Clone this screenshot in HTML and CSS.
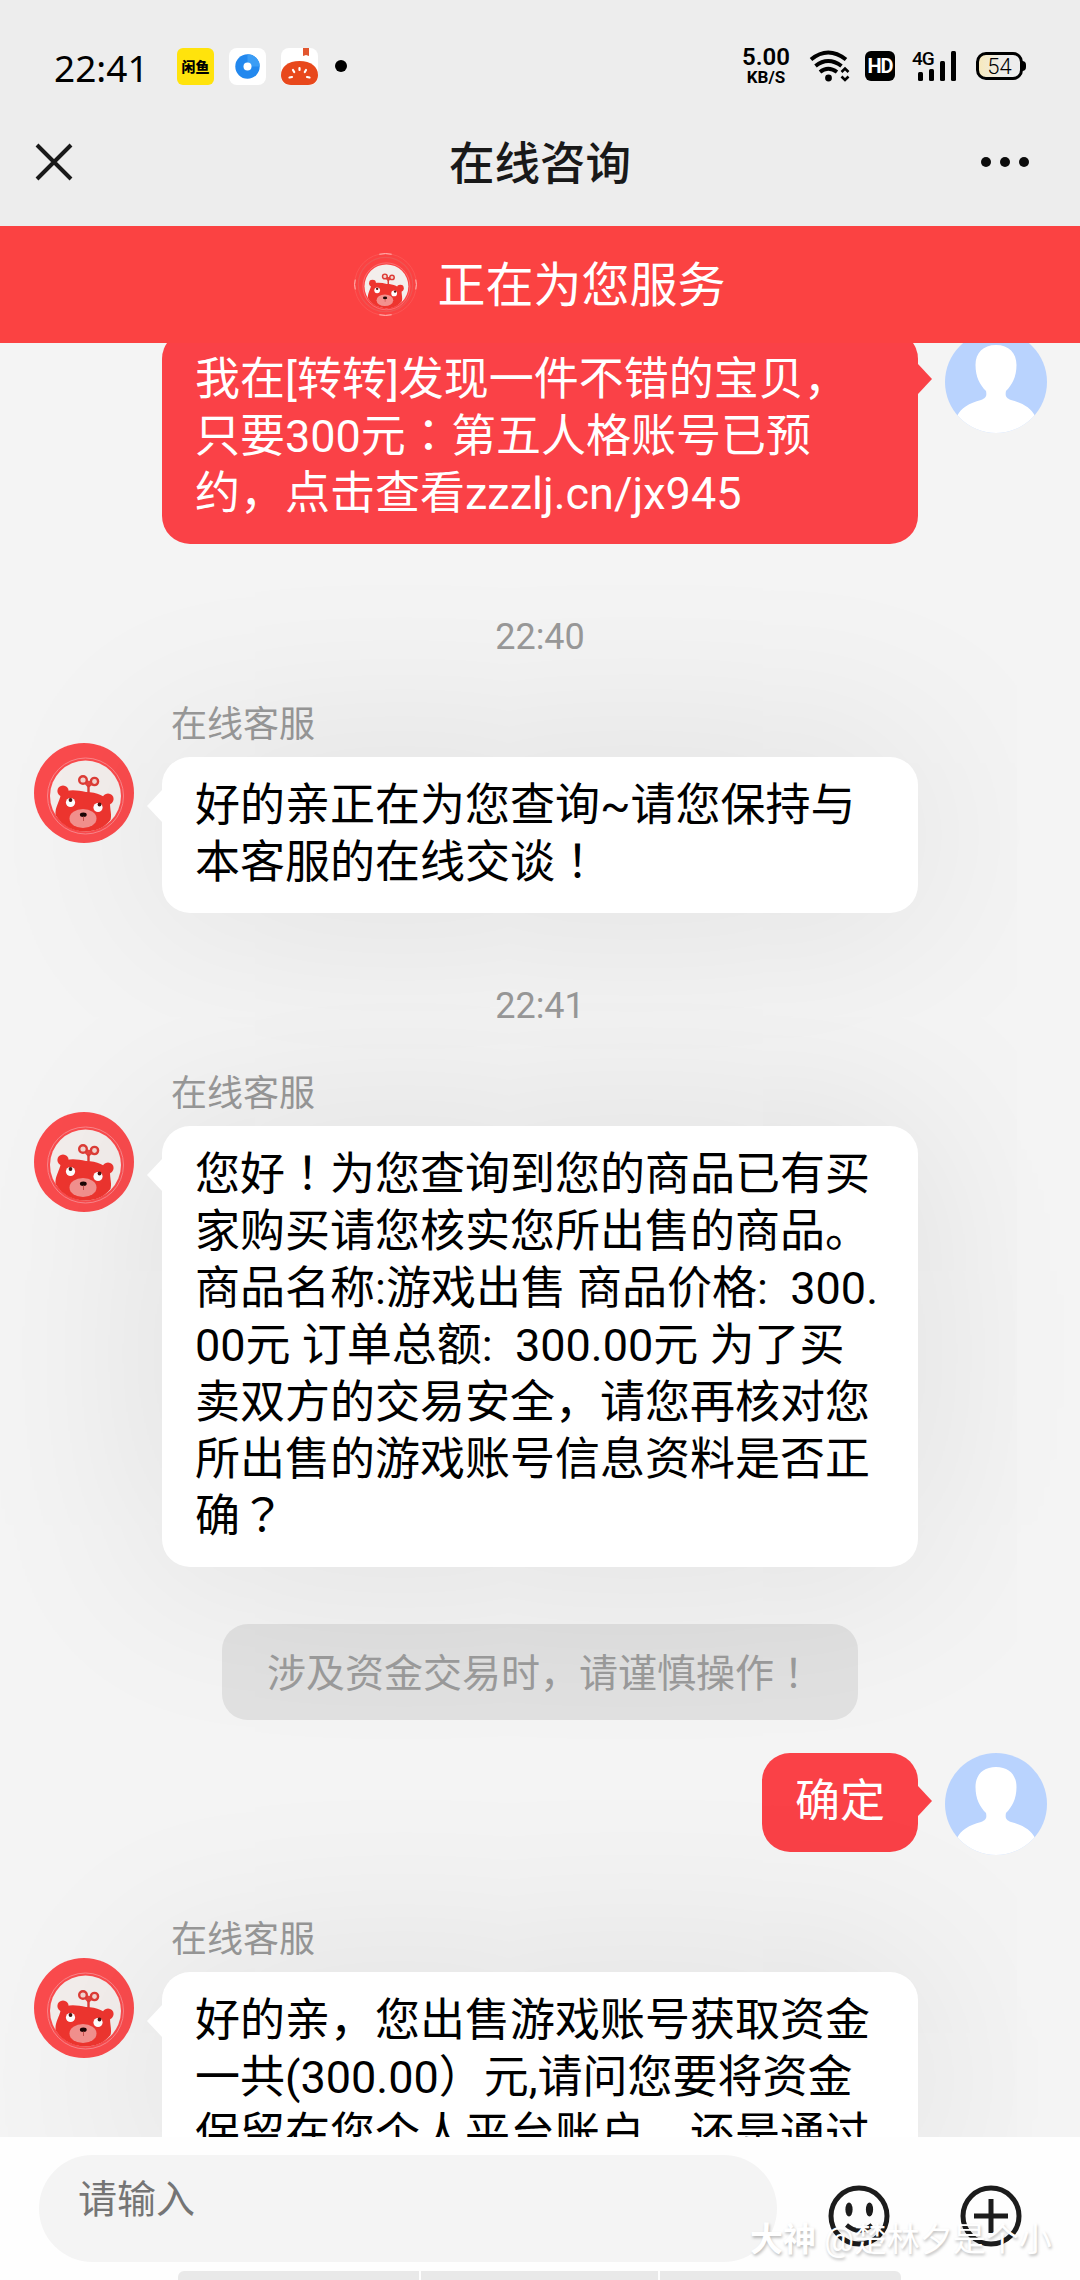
FILE: index.html
```html
<!DOCTYPE html>
<html lang="zh-CN">
<head>
<meta charset="utf-8">
<title>在线咨询</title>
<link rel="stylesheet" href="styles.css">
</head>
<body>
<svg class="defs" width="0" height="0">
  <symbol id="bear" viewBox="0 0 100 100">
    <circle cx="51.5" cy="53" r="38" fill="none" stroke="#f9858a" stroke-width="1"/>
    <circle cx="51.5" cy="53" r="35.5" fill="#f3eeec"/>
    <g fill="#ee352f">
      <circle cx="29" cy="48" r="5.6"/>
      <circle cx="74" cy="56" r="5.6"/>
      <path d="M27 51C33 46 42 47 52 49C63 49 72 53 76 60C76 67 78 72 76.5 77C70 85 61 88.500 51 88.500C40 88.500 28 83 21.500 72C21 64 25 60 27 51Z"/>
    </g>
    <path d="M49 37L54.500 43L60 38.500" fill="#e8443e" stroke="#e8443e" stroke-width="3"/>
    <g fill="none" stroke="#dd3c36" stroke-width="2.400">
      <circle cx="49" cy="37" r="3.800" fill="#f3d5d0"/>
      <circle cx="60.500" cy="38.500" r="3.600" fill="#f3d5d0"/>
      <path d="M54.500 42V50"/>
    </g>
    <circle cx="36.500" cy="59.500" r="4.600" fill="#fff"/>
    <circle cx="64" cy="64.500" r="4.600" fill="#fff"/>
    <circle cx="36.500" cy="57" r="1.900" fill="#4a1613"/>
    <circle cx="65.500" cy="61.500" r="1.900" fill="#4a1613"/>
    <ellipse cx="49" cy="75.500" rx="13.500" ry="9.500" fill="#f3918e"/>
    <ellipse cx="49.300" cy="71.800" rx="3.400" ry="2.200" fill="#1c0605"/>
    <path d="M49.500 73.500V78" stroke="#c8524e" stroke-width="1"/>
  </symbol>
  <symbol id="person" viewBox="0 0 102 102">
    <clipPath id="disc"><circle cx="51" cy="51" r="51"/></clipPath>
    <g clip-path="url(#disc)">
      <rect width="102" height="102" fill="#b9d3fe"/>
      <path d="M51 14C64 14 71.500 22 71.500 34C71.500 46 67 54 61 60C60 65 61 67 66 69C78 72 86 77 90 85V102H12V85C16 77 24 72 36 69C41 67 42 65 41 60C35 54 30.500 46 30.500 34C30.500 22 38 14 51 14Z" fill="#fff"/>
    </g>
  </symbol>
</svg>

<div class="screen">
  <header class="top">
    <div class="status">
      <div class="status-left">
        <span class="clock">22:41</span>
        <span class="app app-yellow">闲鱼</span>
        <svg class="app" viewBox="0 0 37 37"><rect width="37" height="37" rx="8" fill="#fff"/><circle cx="18.500" cy="18.500" r="12.200" fill="#2288ee"/><path d="M18.500 6.300A12.200 12.200 0 0 1 30.700 18.500L22 18.500A3.800 3.800 0 0 0 18.500 15Z" fill="#3b9df5"/><circle cx="18.500" cy="18.500" r="4" fill="#fff"/></svg>
        <svg class="app app-last" viewBox="0 0 37 37"><rect width="37" height="37" rx="8" fill="#fff"/><path d="M22 0H28V8L25 7L22 8Z" fill="#e2562f"/><path d="M18.500 13C30 13 37 19 37 27C37 33 33 37 27 37H10C4 37 0 33 0 27C0 19 7 13 18.500 13Z" fill="#e8481c"/><g stroke="#fff" stroke-width="2.200" stroke-linecap="round"><path d="M18.500 20V22M12 22L13.200 24M25 22L23.800 24M8.500 29.500L11 29M28.500 29.500L26 29"/></g></svg>
        <i class="dot"></i>
      </div>
      <div class="status-right">
        <div class="speed"><b>5.00</b><span>KB/S</span></div>
        <svg class="wifi" width="42" height="32" viewBox="0 0 42 32"><g fill="none" stroke="#000" stroke-width="4"><path d="M2 9.500Q19 -4.500 37 9.500"/><path d="M6.500 16Q19 6 32.500 16"/><path d="M11 22Q19 15.500 28 22"/></g><circle cx="19.500" cy="28" r="3.400"/><path d="M32.500 22L36 18.500L39.500 22M32.500 26.500L36 30L39.500 26.500" fill="none" stroke="#000" stroke-width="2.600"/></svg>
        <span class="hd">HD</span>
        <div class="signal"><span>4G</span><svg width="44" height="30" viewBox="0 0 44 30"><rect x="6" y="21" width="5" height="9" rx="1.500"/><rect x="17" y="18" width="5" height="12" rx="1.500"/><rect x="28" y="10" width="5" height="20" rx="1.500"/><rect x="39" y="0" width="5" height="30" rx="1.500"/></svg></div>
        <div class="battery"><span>54</span></div>
      </div>
    </div>
    <nav class="nav">
      <svg width="38" height="38" viewBox="0 0 38 38"><path d="M2 2L36 36M36 2L2 36" stroke="#191919" stroke-width="4"/></svg>
      <h1>在线咨询</h1>
      <svg width="50" height="12" viewBox="0 0 50 12"><g fill="#0c0c0c"><circle cx="6" cy="6" r="5"/><circle cx="25" cy="6" r="5"/><circle cx="44" cy="6" r="5"/></g></svg>
    </nav>
  </header>

  <div class="banner">
    <svg width="63" height="63" viewBox="-1 -1 102 102"><circle cx="50" cy="50" r="50" fill="none" stroke="#fb5554" stroke-width="1.500"/><circle cx="50" cy="50" r="44" fill="none" stroke="#ee5553" stroke-width="2"/><path d="M40 1Q50 -1 60 1M40 99Q50 101 60 99M1 42Q-1 50 1 58M99 42Q101 50 99 58" fill="none" stroke="#ffc4c0" stroke-width="1.500"/><use href="#bear" width="100" height="100"/></svg>
    <span>正在为您服务</span>
  </div>

  <main class="chat">
    <div class="row mine">
      <div class="bubble red">我在[转转]发现一件不错的宝贝，<br>只要300元<span class="mid" lang="zh-TW">：</span>第五人格账号已预<br>约，点击查看zzzlj.cn/jx945</div>
      <svg class="face"><use href="#person"/></svg>
    </div>
    <time>22:40</time>
    <div class="row">
      <svg class="logo"><use href="#bear"/></svg>
      <div class="body">
        <div class="name">在线客服</div>
        <div class="bubble">好的亲正在为您查询~请您保持与<br>本客服的在线交谈<span class="mid" lang="zh-TW">！</span></div>
      </div>
    </div>
    <time>22:41</time>
    <div class="row">
      <svg class="logo"><use href="#bear"/></svg>
      <div class="body">
        <div class="name">在线客服</div>
        <div class="bubble">您好<span class="mid" lang="zh-TW">！</span>为您查询到您的商品已有买<br>家购买请您核实您所出售的商品。<br>商品名称:游戏出售 商品价格:&nbsp;&nbsp;300.<br>00元 订单总额:&nbsp;&nbsp;300.00元 为了买<br>卖双方的交易安全，请您再核对您<br>所出售的游戏账号信息资料是否正<br>确<span class="mid" lang="zh-TW">？</span></div>
      </div>
    </div>
    <div class="notice">涉及资金交易时，请谨慎操作<span class="mid" lang="zh-TW">！</span></div>
    <div class="row mine">
      <div class="bubble red">确定</div>
      <svg class="face"><use href="#person"/></svg>
    </div>
    <div class="row last">
      <svg class="logo"><use href="#bear"/></svg>
      <div class="body">
        <div class="name">在线客服</div>
        <div class="bubble">好的亲，您出售游戏账号获取资金<br>一共(300.00）元,请问您要将资金<br>保留在您个人平台账户，还是通过</div>
      </div>
    </div>
  </main>

  <footer class="composer">
    <div class="tools">
      <div class="input">请输入</div>
      <svg class="tool" viewBox="0 0 62 62"><circle cx="31" cy="31" r="28" fill="none" stroke="#1c1c1c" stroke-width="5"/><ellipse cx="21" cy="24.500" rx="3.600" ry="7" fill="#1c1c1c"/><ellipse cx="41.500" cy="24.500" rx="3.600" ry="7" fill="#1c1c1c"/><path d="M18.500 40Q31 51 44 40" fill="none" stroke="#1c1c1c" stroke-width="4.500"/></svg>
      <svg class="tool plus" viewBox="0 0 62 62"><circle cx="31" cy="31" r="28" fill="none" stroke="#1c1c1c" stroke-width="5"/><path d="M31 14V48M14 31H48" stroke="#1c1c1c" stroke-width="5"/></svg>
    </div>
    <div class="strip"><i></i><i></i><i></i></div>
    <div class="mark"><b>大神</b> @楚林夕是个小</div>
  </footer>
</div>
</body>
</html>
```
FILE: styles.css
```css
* { box-sizing: border-box; }
body {
  margin: 0;
  font-family: Roboto, "Noto Sans CJK SC", sans-serif;
  color: #000;
}
.defs { display: block; position: absolute; }
.screen {
  width: 1080px;
  height: 2280px;
  display: flex;
  flex-direction: column;
  overflow: hidden;
  background: #f4f4f4;
}
.top { height: 226px; background: #ededed; flex: none; }
.status {
  height: 132px;
  padding: 0 57px 0 54px;
  display: flex;
  align-items: center;
  justify-content: space-between;
}
.status-left, .status-right { display: flex; align-items: center; }
.clock {
  width: 123px;
  font: 37px/40px "Noto Sans", sans-serif;
  padding-top: 3px;
}
.app { width: 37px; height: 37px; margin-right: 15px; }
.app-last { margin-right: 17px; }
.app-yellow {
  border-radius: 6px;
  background: #ffe30c;
  font: 900 14px/37px "Noto Sans CJK SC", sans-serif;
  text-align: center;
}
.dot { width: 12px; height: 12px; border-radius: 50%; background: #000; }
.speed {
  width: 50px;
  margin-right: 18px;
  display: flex;
  flex-direction: column;
  align-items: center;
}
.speed b { font-size: 24px; line-height: 23px; font-weight: 600; }
.speed span { font-size: 17px; line-height: 17px; font-weight: 700; }
.wifi { margin-right: 14px; }
.hd {
  width: 30px;
  height: 30px;
  margin-right: 17px;
  border-radius: 6px;
  background: #000;
  color: #fff;
  font: 700 20px/31px "Roboto", sans-serif;
  text-align: center;
  letter-spacing: -1px;
}
.signal { display: grid; width: 46px; margin-right: 18px; }
.signal span, .signal svg { grid-area: 1 / 1; }
.signal span { font-size: 19px; line-height: 15px; font-weight: 500; letter-spacing: -1px; }
.battery {
  position: relative;
  width: 47px;
  height: 28px;
  border: 3px solid #000;
  border-radius: 10px;
  background: linear-gradient(90deg, #f7e9bd, #ededed 60%);
  font-size: 22px;
  line-height: 23px;
  font-weight: 300;
  text-align: center;
}
.battery::after {
  content: "";
  position: absolute;
  right: -6px;
  top: 6px;
  width: 4px;
  height: 10px;
  border-radius: 0 4px 4px 0;
  background: #000;
}
.nav {
  height: 60px;
  padding: 0 35px;
  display: grid;
  grid-template-columns: 1fr auto 1fr;
  align-items: center;
}
.nav svg { margin-bottom: 4px; }
.nav svg:last-child { justify-self: end; margin-right: 15px; }
.nav h1 { margin: 0; padding-top: 3px; font-size: 45.5px; line-height: 60px; font-weight: 500; color: #191919; }
.banner {
  position: relative;
  z-index: 2;
  flex: none;
  height: 117px;
  display: flex;
  align-items: center;
  justify-content: center;
  gap: 20px;
  background: #fb4242;
  color: #fff;
  font-size: 48px;
}
.banner span { padding-bottom: 8px; }
.chat {
  flex: none;
  height: 1794px;
  overflow: hidden;
  display: flex;
  flex-direction: column;
}
.chat > * { flex: none; }
.row { display: flex; padding-left: 34px; gap: 28px; }
.mine { justify-content: flex-end; align-items: flex-start; gap: 27px; padding: 0 33px 0 0; }
.mine:first-child { margin-top: -12px; height: 213px; }
.face { width: 102px; height: 102px; }
.logo { width: 100px; height: 100px; margin-top: 45px; border-radius: 50%; background: #fa4b4d; flex: none; }
.body { width: 756px; }
.name { padding-left: 9px; height: 50px; margin-bottom: 9px; font-size: 36px; line-height: 55px; color: #999; }
.bubble {
  position: relative;
  padding: 20px 0 22px 33px;
  border-radius: 28px;
  background: #fff;
  font-size: 45px;
  line-height: 57px;
  white-space: nowrap;
  box-shadow: 0 0 200px rgba(0, 0, 0, 0.1);
}
.bubble::before {
  content: "";
  position: absolute;
  left: -15px;
  top: 33px;
  border: solid transparent;
  border-width: 16px 15px 16px 0;
  border-right-color: #fff;
}
.red { width: 756px; background: #fa4147; color: #fff; box-shadow: none; }
.red::before {
  left: auto;
  right: -14px;
  border-width: 15px 0 15px 14px;
  border-left-color: #fa4147;
}
.notice + .mine .red { width: 156px; }
.mid { font-family: Roboto, "Noto Sans CJK TC", sans-serif; }
time { display: block; height: 50px; margin: 67px 0 37px; font-size: 36px; line-height: 53px; color: #999; text-align: center; }
.notice {
  width: 636px;
  height: 96px;
  margin: 57px auto 33px;
  padding-left: 45px;
  border-radius: 26px;
  background: rgba(0, 0, 0, 0.08);
  color: #999;
  font-size: 39px;
  line-height: 101px;
  position: relative;
}
.last { margin-top: 58px; }
.composer {
  position: relative;
  flex: 1;
  background: #fefefe;
  display: flex;
  flex-direction: column;
}
.tools { display: flex; padding: 18px 0 9px 39px; }
.input {
  width: 738px;
  height: 107px;
  padding: 17px 39px;
  border-radius: 54px;
  background: #f4f4f4;
  color: #757575;
  font-size: 39px;
  line-height: 56px;
}
.tool { width: 62px; height: 62px; margin: 30px 0 0 51px; }
.plus { margin-left: 70px; }
.strip {
  width: 723px;
  height: 9px;
  margin-left: 178px;
  display: grid;
  grid-template-columns: 241px 237px 241px;
  gap: 2px;
  overflow: hidden;
  border-radius: 6px 6px 0 0;
}
.strip i { background: #e9e9e9; }
.mark {
  position: absolute;
  left: 750px;
  top: 79px;
  font-size: 33px;
  line-height: 48px;
  white-space: nowrap;
  color: #fff;
  text-shadow: 1px 2px 3px rgba(0, 0, 0, 0.25);
}
```
